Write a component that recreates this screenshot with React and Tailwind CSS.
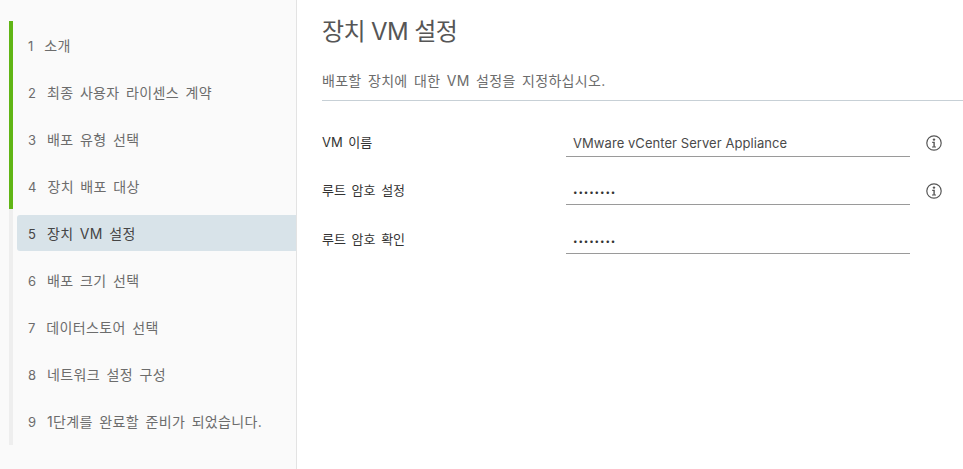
const steps = [
	"소개",
	"최종 사용자 라이센스 계약",
	"배포 유형 선택",
	"장치 배포 대상",
	"장치 VM 설정",
	"배포 크기 선택",
	"데이터스토어 선택",
	"네트워크 설정 구성",
	"1단계를 완료할 준비가 되었습니다.",
];

const font = "font-['Inter','Noto_Sans_CJK_KR',sans-serif]";

function InfoIcon() {
	return (
		<svg width="16" height="16" viewBox="0 0 16 16" fill="none" className="shrink-0">
			<circle cx="8" cy="8" r="7.2" stroke="#565656" strokeWidth="1.2" />
			<circle cx="8" cy="4.6" r="1.2" fill="#565656" />
			<path d="M6.2 6.8h2.6v4.6h1.2v1.1H6v-1.1h1.4V7.9H6.2z" fill="#565656" />
		</svg>
	);
}

function Field({ label, value, password, info }) {
	return (
		<div className="flex h-[48.5px] items-start">
			<label className="w-[244px] shrink-0 pt-[10px] text-[13px] leading-[20px] text-[#333333] [word-spacing:2px]">{label}</label>
			<div className="flex h-[35px] w-[344px] shrink-0 items-end border-b border-[#9a9a9a] pb-[3px] pl-[7px] text-[13px] leading-[20px] tracking-[0.06px] text-[#4a4a4a]">
				{password ? <span className="-mb-[1px] text-[8px] tracking-[0.9px] text-[#333333]">••••••••</span> : value}
			</div>
			{info && (
				<div className="ml-[16px] pt-[13px]">
					<InfoIcon />
				</div>
			)}
		</div>
	);
}

export default function App() {
	return (
		<div className={`flex h-[469px] w-[963px] overflow-hidden bg-white ${font}`}>
			<aside className="h-full w-[297px] shrink-0 border-r border-[#e3e3e3] bg-[#fafafa] pl-[9px] pt-[21px]">
				<ol className="border-l-4 border-[#eeeeee]">
					{steps.map((step, i) => (
						<li
							key={step}
							className={`-ml-1 border-l-4 pl-1 pt-[6px] ${i < 4 ? "border-[#60b515]" : "border-[#eeeeee]"} ${i === 8 ? "h-[48px]" : "h-[47px]"}`}
						>
							<div
								className={`flex h-[36px] items-center rounded-l-[3px] pl-[11px] pt-[1px] text-[14px] tracking-[0.35px] [word-spacing:2.2px] ${i === 4 ? "bg-[#d8e3e9] text-[#454545]" : "text-[#6c6c6c]"}`}
							>
								<span>
									<span className="mr-[11px] text-[13px] tracking-normal">{i + 1}</span>
									{step}
								</span>
							</div>
						</li>
					))}
				</ol>
			</aside>
			<main className="min-w-0 flex-1 pl-[25px]">
				<h1 className="mt-[16px] text-[24px] font-normal leading-[32px] tracking-[-0.6px] text-[#565656]">장치 VM 설정</h1>
				<p className="mt-[23px] border-b border-[#c7d0d6] pb-[9px] text-[14px] leading-[20px] tracking-[0.3px] text-[#6c6c6c] [word-spacing:2.2px]">
					배포할 장치에 대한 VM 설정을 지정하십시오.
				</p>
				<div className="mt-[20.7px]">
					<Field label="VM 이름" value="VMware vCenter Server Appliance" info />
					<Field label="루트 암호 설정" password info />
					<Field label="루트 암호 확인" password />
				</div>
			</main>
		</div>
	);
}
